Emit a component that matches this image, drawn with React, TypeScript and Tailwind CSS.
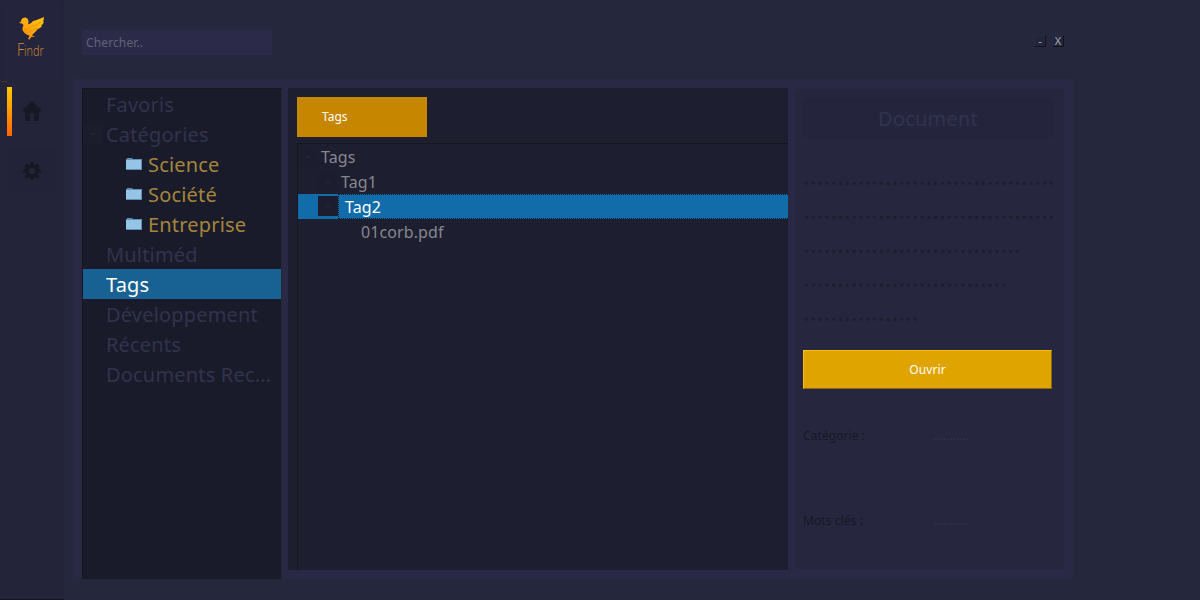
import React from "react";

const font = "font-['Noto_Sans',sans-serif]";

function Chevron() {
  return (
    <svg width="6" height="4" viewBox="0 0 6 4" fill="none" stroke="#2b2e48" strokeWidth="1">
      <path d="M1 0.8 L3 2.8 L5 0.8" />
    </svg>
  );
}

function Folder() {
  return (
    <svg width="16" height="12" viewBox="0 0 16 12" className="mr-[6px] mb-[3px] shrink-0">
      <path d="M1 0h5l1 1h9v11H0V1h1z" fill="#5d8fb5" />
      <path d="M0 2h15v9H0z" fill="#96c4e6" />
    </svg>
  );
}

function Bird() {
  return (
    <svg width="26" height="24" viewBox="0 0 26 24">
      <defs>
        <linearGradient id="bird" x1="1" y1="0" x2="0" y2="1">
          <stop offset="0" stopColor="#ffc60a" />
          <stop offset="0.5" stopColor="#ffad10" />
          <stop offset="1" stopColor="#f5780a" />
        </linearGradient>
      </defs>
      <path d="M0 7 L2 5.500 Q2 2 6 1.500 Q9.300 2 9.500 5.500 L9.200 8.500 Q12 8 14 5 Q18 4 25 1 L24.500 4.500 L23.500 5.500 L25 5.500 Q24.500 8 22 9.500 L23.200 9.800 Q21.500 12.500 18.500 13.200 Q16.500 16 14.500 17.500 L13 19.500 L16.500 21 L12.500 20.800 L10.500 23.500 L9 23.300 L10.500 19.800 Q5 18 3.500 14 Q3.200 11.500 4.500 9 L3 7.500 Z" fill="url(#bird)" />
      <path d="M5 13 Q9 15 11.500 10.500 Q17 10 22 6 M10 16 Q14 13 19 12" fill="none" stroke="#f28505" strokeWidth="0.800" />
    </svg>
  );
}

function HomeIcon() {
  return (
    <svg width="20" height="20" viewBox="0 0 20 20" fill="#171824">
      <path d="M10 0 L19.500 9.300 Q19.500 10.500 18.200 10.500 L17 10.500 V20 H12.200 V13 Q12.200 12 11.200 12 H8.800 Q7.800 12 7.800 13 V20 H3 V10.500 H1.800 Q.5 10.500 .5 9.300 Z" />
    </svg>
  );
}

function GearIcon() {
  return (
    <svg width="18" height="18" viewBox="0 0 18 18">
      <g fill="#171824">
        <rect x="7" y="0" width="4" height="18" rx="1.300" />
        <rect x="7" y="0" width="4" height="18" rx="1.300" transform="rotate(45 9 9)" />
        <rect x="7" y="0" width="4" height="18" rx="1.300" transform="rotate(90 9 9)" />
        <rect x="7" y="0" width="4" height="18" rx="1.300" transform="rotate(135 9 9)" />
        <circle cx="9" cy="9" r="6.600" />
      </g>
      <circle cx="9" cy="9" r="3.100" fill="#222439" />
    </svg>
  );
}

function Sidebar() {
  return (
    <aside className="flex h-full w-16 shrink-0 flex-col border-b border-[#151622] bg-[#232439]">
      <div className="ml-[2px] mt-[2px] flex h-[78px] w-[59px] flex-col items-center bg-[#24253c] pt-[14px]">
        <Bird />
        <span className="inline-flex h-4 scale-x-[0.78] items-baseline whitespace-nowrap pr-[2px] font-['Open_Sans',sans-serif] text-[14px] font-light leading-[18px] text-[#d18a35]">
          <span className="text-[18px]">F</span>indr
        </span>
      </div>
      <div className="ml-[2px] mt-[1px] h-px w-[5px] bg-[#4b371c]" />
      <div className="ml-[7px] mt-[5px] flex h-[49px] w-[50px] bg-[#232439]">
        <div className="h-[49px] w-[5px] bg-gradient-to-b from-[#ffc800] to-[#fa6400]" />
        <div className="ml-[10px] mt-[14px]"><HomeIcon /></div>
      </div>
      <div className="ml-[7px] mt-[12px] flex h-11 w-[50px] items-center justify-center bg-[#222338] pt-px">
        <GearIcon />
      </div>
    </aside>
  );
}

type Item = { label: string; kind?: "folder" | "active" | "open" };

const items: Item[] = [
  { label: "Favoris" },
  { label: "Catégories", kind: "open" },
  { label: "Science", kind: "folder" },
  { label: "Société", kind: "folder" },
  { label: "Entreprise", kind: "folder" },
  { label: "Multiméd" },
  { label: "Tags", kind: "active" },
  { label: "Développement" },
  { label: "Récents" },
  { label: "Documents Rec..." },
];

function CategoryTree() {
  return (
    <nav className="mt-[9px] h-[491px] w-[200px] shrink-0 border-l border-r border-t border-l-[#15151c] border-r-[#27282f] border-t-[#15151c] bg-[#1a1b2a] text-[20px] leading-[30px] tracking-[0.18px]">
      {items.map((item) => {
        if (item.kind === "folder")
          return (
            <div key={item.label} className="flex h-[30px] items-center pl-[43px] pt-[2px] text-[#a5853c]">
              <Folder />
              {item.label}
            </div>
          );
        if (item.kind === "active")
          return <div key={item.label} className="h-[30px] bg-[#176292] pl-[23px] pt-px text-white">{item.label}</div>;
        return (
          <div key={item.label} className="flex h-[30px] items-center whitespace-nowrap pt-[2px] text-[#30334e]">
            <span className="flex w-[23px] shrink-0">
              {item.kind === "open" && (
                <span className="mb-[2px] flex h-5 w-5 items-center justify-center bg-[#1b1d2d]">
                  <Chevron />
                </span>
              )}
            </span>
            {item.label}
          </div>
        );
      })}
    </nav>
  );
}

function TagsPanel() {
  return (
    <section className="ml-[6px] mt-[9px] flex h-[482px] w-[500px] shrink-0 flex-col bg-[#1d1e2f] pl-[9px] pt-[9px]">
      <div className="flex h-10 w-[130px] items-center bg-[#c68600] pl-[25px] text-[12px] text-white">Tags</div>
      <div className="mt-[6px] flex-1 border-l border-t border-[#16171e] text-[16px] leading-[25px] tracking-[0.1px] text-[#85888f]">
        <div className="flex h-[25px] items-center">
          <span className="flex h-5 w-5 items-center justify-center bg-[#1c1d2e]"><Chevron /></span>
          <span className="pl-[3px] pt-[2px]">Tags</span>
        </div>
        <div className="flex h-[25px] items-center pl-5">
          <span className="flex h-5 w-5 items-center justify-center bg-[#1c1d2e]"><Chevron /></span>
          <span className="pl-[3px] pt-[2px]">Tag1</span>
        </div>
        <div className="flex h-[25px] items-center bg-[#116ca9] pl-5 text-white">
          <span className="mb-px flex h-5 w-5 shrink-0 items-center justify-center bg-[#1c1d2e]"><Chevron /></span>
          <span className="h-[25px] flex-1 border-y border-l border-dotted border-[#07182b] pl-[6px] leading-[25px]">Tag2</span>
        </div>
        <div className="h-[25px] pl-[63px] pt-px">01corb.pdf</div>
      </div>
    </section>
  );
}

const dotLines = [37, 37, 32, 30, 17];

function DocumentPanel() {
  return (
    <section className="ml-[6px] mt-[10px] flex h-[480px] w-[270px] shrink-0 flex-col bg-[#26273f] pl-[9px] pt-[9px] text-[12px]">
      <h2 className="flex h-10 w-[250px] items-center justify-center bg-[#24253d] pt-[2px] text-[20px] tracking-[0.2px] text-[#30334e]">Document</h2>
      <div className="mt-[20px] w-[250px] overflow-hidden text-[25.333px] leading-[34px] tracking-[0.02px] text-[#1c1d2e]">
        {dotLines.map((n, i) => (
          <div key={i} className="h-[34px] whitespace-nowrap">{".".repeat(n)}</div>
        ))}
      </div>
      <button className="mt-[22px] h-[39px] w-[249px] shrink-0 border border-b-[#8b6808] border-l-[#ffbd18] border-r-[#8b6808] border-t-[#ffbd18] bg-[#dfa400] tracking-[0.1px] text-white">
        Ouvrir
      </button>
      <div className="mt-[38px] flex h-[18px] leading-[18px] tracking-[0.08px] text-[#171826]">
        <span className="w-[130px]">Catégorie :</span>
        <span className="text-[#34364e]">...........</span>
      </div>
      <div className="mt-[67px] flex h-[18px] leading-[18px] tracking-[0.08px] text-[#171826]">
        <span className="w-[130px]">Mots clés :</span>
        <span className="text-[#34364e]">...........</span>
      </div>
    </section>
  );
}

function WindowButton({ children }: { children: React.ReactNode }) {
  return (
    <button className="flex h-3 w-3 items-center justify-center border-b border-r border-l border-t border-b-[#11121e] border-l-[#292b42] border-r-[#11121e] border-t-[#292b42] bg-[#23253b] text-[11px] leading-3 text-[#a9aab4]">
      {children}
    </button>
  );
}

export default function App() {
  return (
    <div className={`flex h-[600px] w-[1200px] overflow-hidden bg-[#25273c] ${font}`}>
      <Sidebar />
      <main className="flex flex-1 flex-col pl-[9px]">
        <header className="flex h-[79px] w-[1000px] justify-between pl-[9px] pr-[9px]">
          <input
            placeholder="Chercher.."
            className="mt-[30px] h-[25px] w-[190px] bg-[#2b2a48] px-1 text-[12px] tracking-[0.12px] text-white outline-none placeholder:text-[#62627b]"
          />
          <div className="mt-[35px] flex gap-[6px]">
            <WindowButton>-</WindowButton>
            <WindowButton>X</WindowButton>
          </div>
        </header>
        <div className="flex h-[500px] w-[1000px] bg-[#292945] pl-[9px]">
          <CategoryTree />
          <TagsPanel />
          <DocumentPanel />
        </div>
      </main>
    </div>
  );
}
